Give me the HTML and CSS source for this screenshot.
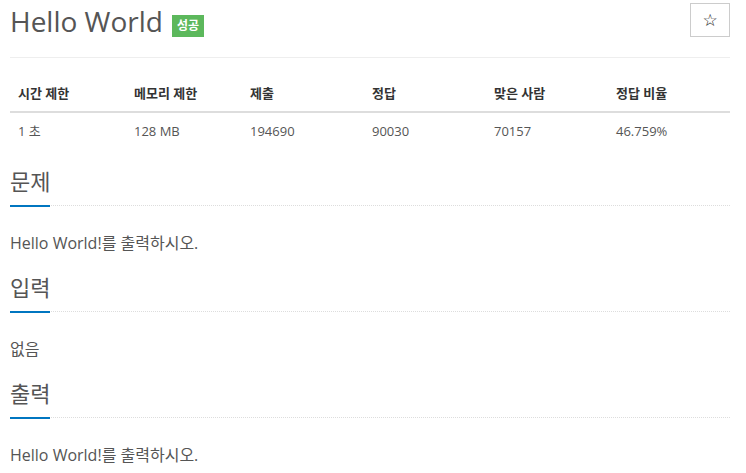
FILE: index.html
```html
<!DOCTYPE html>
<html lang="ko">
<head>
<meta charset="utf-8">
<title>Hello World</title>
<link rel="stylesheet" href="styles.css">
</head>
<body>
<div class="wrap">
  <div class="page-header">
    <h1 class="title">Hello World<span class="badge">성공</span></h1>
    <button class="star-btn" type="button">☆</button>
  </div>

  <table class="info">
    <thead>
      <tr>
        <th class="c16">시간 제한</th>
        <th class="c16">메모리 제한</th>
        <th class="c17">제출</th>
        <th class="c17">정답</th>
        <th class="c17">맞은 사람</th>
        <th class="c17">정답 비율</th>
      </tr>
    </thead>
    <tbody>
      <tr>
        <td>1 초</td>
        <td>128 MB</td>
        <td>194690</td>
        <td>90030</td>
        <td>70157</td>
        <td>46.759%</td>
      </tr>
    </tbody>
  </table>

  <section class="sect">
    <h2 class="headline"><span>문제</span></h2>
    <p class="text">Hello World!를 출력하시오.</p>
  </section>

  <section class="sect">
    <h2 class="headline"><span>입력</span></h2>
    <p class="text">없음</p>
  </section>

  <section class="sect">
    <h2 class="headline"><span>출력</span></h2>
    <p class="text">Hello World!를 출력하시오.</p>
  </section>
</div>
</body>
</html>
```

FILE: styles.css
```css
* { box-sizing: border-box; }

body {
  margin: 0;
  font-family: "Open Sans", "Noto Sans CJK KR", sans-serif;
  font-size: 14px;
  color: #555;
  background: #fff;
}

.wrap {
  width: 720px;
  margin-left: 10px;
}

.page-header {
  display: flex;
  justify-content: space-between;
  align-items: flex-start;
  border-bottom: 1px solid #eee;
  padding-bottom: 17px;
}

.title {
  margin: 0;
  padding-top: 2px;
  font-size: 28px;
  font-weight: 400;
  line-height: normal;
  color: #555;
}

.badge {
  display: inline-block;
  margin-left: 9px;
  padding: 3px 5px;
  font-size: 12px;
  line-height: 16px;
  font-weight: 700;
  color: #fff;
  background: #5cb85c;
  vertical-align: 2px;
}

.star-btn {
  margin-top: 3px;
  width: 40px;
  height: 34px;
  padding: 0;
  border: 1px solid #ccc;
  border-radius: 0;
  background: #fff;
  color: #222;
  font-family: "DejaVu Sans", sans-serif;
  font-size: 17px;
  line-height: 20px;
}

.info {
  width: 720px;
  margin-top: 17px;
  margin-bottom: 3px;
  border-collapse: collapse;
  font-size: 13px;
  color: #333;
}

.info th,
.info td {
  padding: 8px;
  line-height: 20px;
  text-align: left;
}

.info th {
  font-weight: 700;
  border-bottom: 2px solid #ddd;
}

.info td { color: #555; }

.c16 { width: 116px; }
.c17 { width: 122px; }

.headline {
  margin: 17px 0 0;
  font-size: 22px;
  font-weight: 400;
  line-height: 30px;
  border-bottom: 1px dotted #ddd;
}

.headline span {
  display: inline-block;
  padding-bottom: 9px;
  border-bottom: 2px solid #0076c0;
  margin-bottom: -2px;
}

.text {
  margin: 25px 0 0;
  font-size: 16px;
  line-height: 24px;
}
```
